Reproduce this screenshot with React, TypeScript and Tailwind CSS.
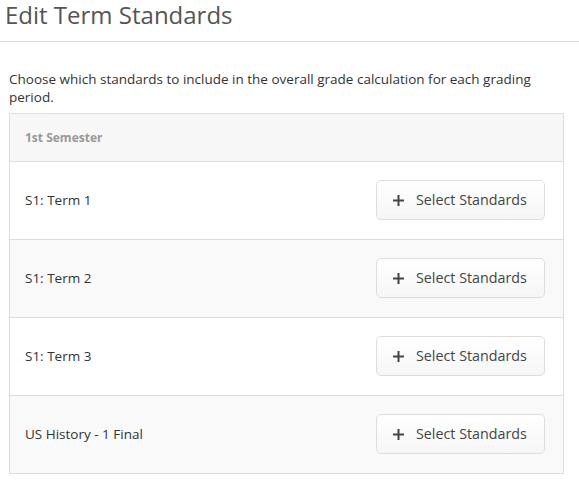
import React from 'react'

const rows = ['S1: Term 1', 'S1: Term 2', 'S1: Term 3', 'US History - 1 Final']

function PlusIcon() {
  return (
    <svg width="13" height="13" viewBox="0 0 13 13" className="shrink-0">
      <path d="M6.5 1v11M1 6.5h11" stroke="#444" strokeWidth="2" />
    </svg>
  )
}

export default function App() {
  return (
    <div className="w-[579px] h-[483px] bg-white text-[#333] overflow-hidden" style={{ fontFamily: '"Open Sans", sans-serif' }}>
      <div className="h-[42px] flex items-start border-b border-[#dddddd] pl-[5px]">
        <h1 className="text-[24px] leading-[32px] -mt-[1.5px] text-[#555]">Edit Term Standards</h1>
      </div>
      <div className="pl-[9px] pr-[15px]">
        <p className="text-[13.5px] leading-[18px] text-[#333] mt-[28px] mb-[7px] pr-[30px]">
          Choose which standards to include in the overall grade calculation for each grading period.
        </p>
        <div className="border border-[#dddddd]">
          <div className="h-[47px] bg-[#f7f7f7] flex items-center px-[15px] text-[12px] font-bold text-[#999]">1st Semester</div>
          {rows.map((r, i) => (
            <div
              key={r}
              className={
                'h-[78px] border-t border-[#dddddd] flex items-center justify-between pl-[15px] pr-[18px] ' +
                (i % 2 === 1 ? 'bg-[#f9f9f9]' : 'bg-white')
              }
            >
              <span className="text-[13.5px] text-[#333]">{r}</span>
              <button className="h-[40px] w-[169px] -mt-[1px] rounded-[5px] border border-[#dddddd] bg-gradient-to-b from-white to-[#f6f6f6] flex items-center pl-[15px] gap-[11px] text-[14.3px] text-[#444]">
                <PlusIcon />
                <span>Select Standards</span>
              </button>
            </div>
          ))}
        </div>
      </div>
    </div>
  )
}
